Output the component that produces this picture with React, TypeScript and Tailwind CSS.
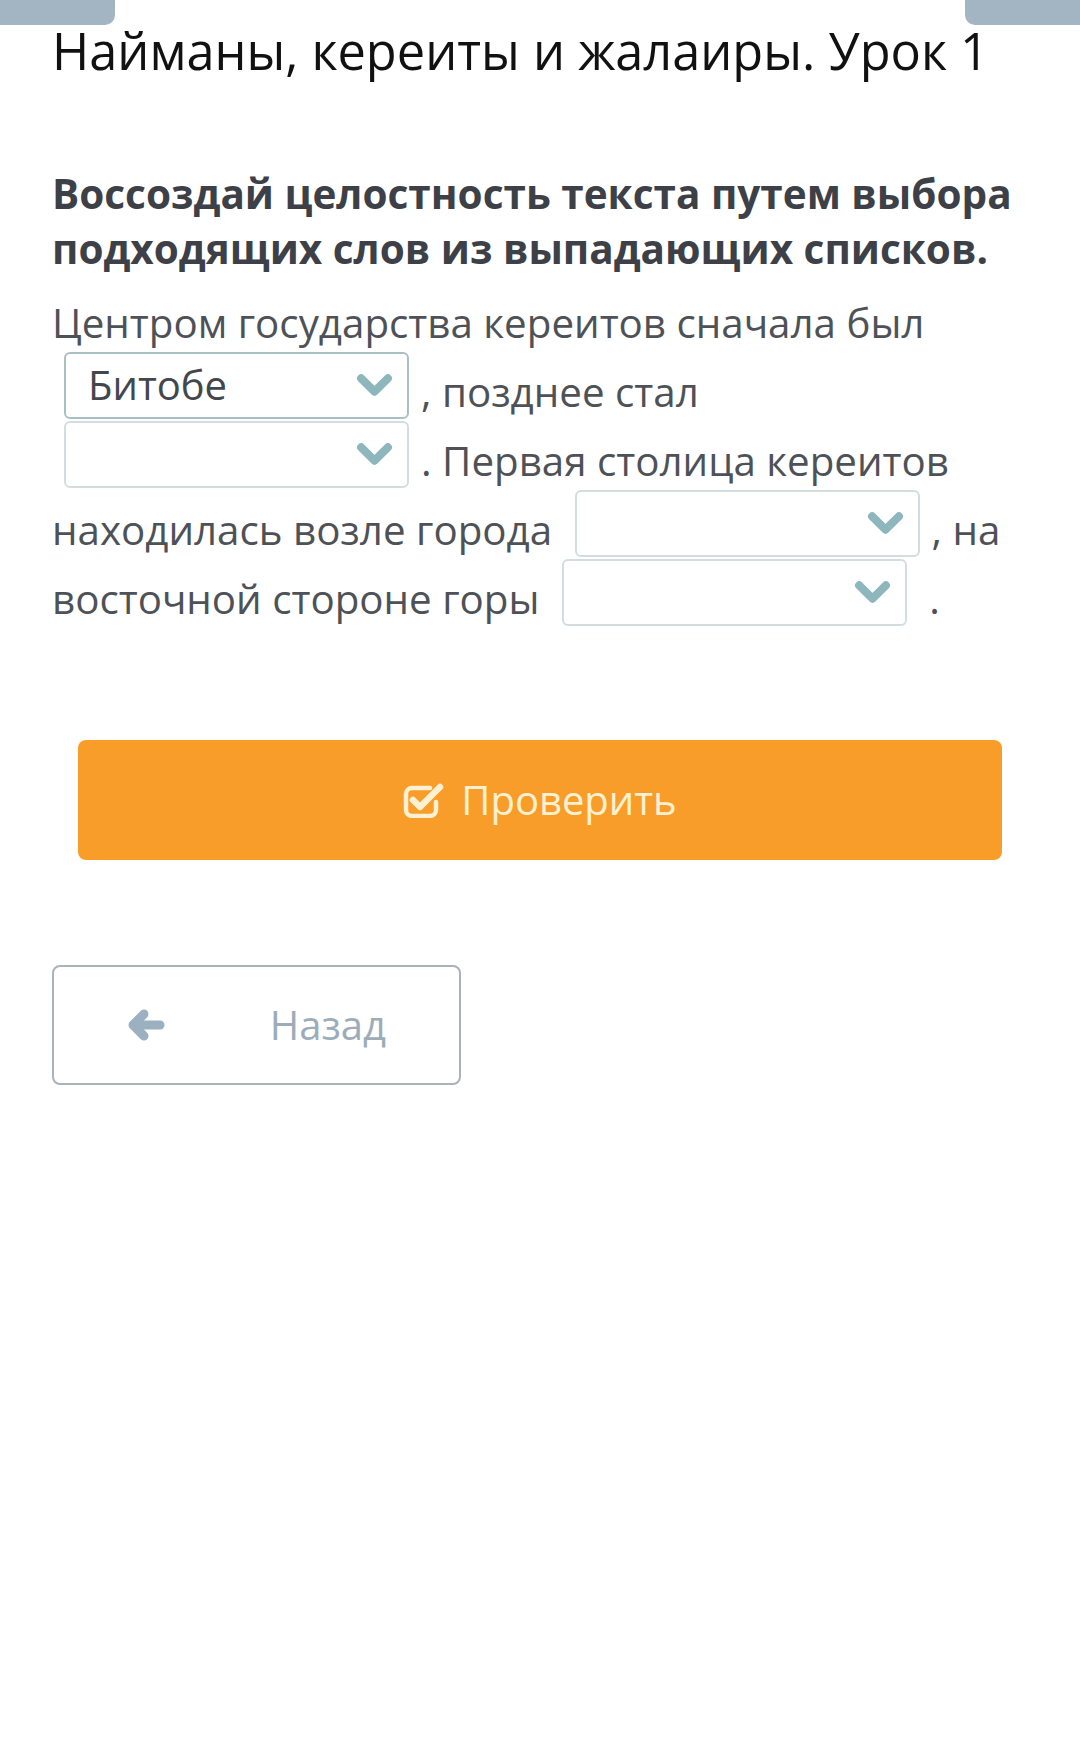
const Chevron = () => (
  <svg viewBox="0 0 36 24" className="h-[25px] w-[37px]" fill="none">
    <polyline
      points="5,5 18,18 31,5"
      stroke="#8db6bd"
      strokeWidth="8"
      strokeLinecap="round"
      strokeLinejoin="round"
    />
  </svg>
);

const CheckSquare = () => (
  <svg viewBox="0 0 42 36" className="h-[36px] w-[42px]" fill="none">
    <path
      d="M27 6 H9 a6 6 0 0 0 -6 6 v16 a6 6 0 0 0 6 6 h18 a6 6 0 0 0 6 -6 v-8"
      stroke="currentColor"
      strokeWidth="4.5"
      strokeLinecap="round"
    />
    <polyline
      points="10,18 17,25 37,5"
      stroke="currentColor"
      strokeWidth="6.5"
      strokeLinecap="round"
      strokeLinejoin="round"
    />
  </svg>
);

const ArrowLeft = () => (
  <svg viewBox="0 0 38 32" className="h-[32px] w-[38px]" fill="none">
    <polyline
      points="17,5 6,16 17,27"
      stroke="#9bb0c0"
      strokeWidth="9"
      strokeLinecap="round"
      strokeLinejoin="round"
    />
    <line
      x1="7"
      y1="16"
      x2="33"
      y2="16"
      stroke="#9bb0c0"
      strokeWidth="9"
      strokeLinecap="round"
    />
  </svg>
);

const Dropdown = ({ value, active }: { value?: string; active?: boolean }) => {
  return (
    <span
      className={`mx-3 -mt-[17px] mb-[5px] inline-flex h-[67px] w-[345px] items-center justify-between rounded-md border-2 bg-white pl-[22px] pr-[14px] align-middle ${
        active ? 'border-[#a9bfc3]' : 'border-[#d3dddf]'
      }`}
    >
      <span className="text-[40px] leading-none text-[#43474c]">{value}</span>
      <Chevron />
    </span>
  );
};

export default function App() {
  return (
    <div
      className="relative min-h-screen w-full bg-white"
      style={{ fontFamily: '"Open Sans", "Noto Sans", sans-serif' }}
    >
      {/* top tabs */}
      <div className="absolute left-0 top-0 h-[25px] w-[115px] rounded-br-[10px] bg-[#a3b5c2]" />
      <div className="absolute right-0 top-0 h-[25px] w-[115px] rounded-bl-[10px] bg-[#a3b5c2]" />

      <main className="px-[52px] pt-[18px]">
        <h1 className="text-[50.5px] leading-[66px] text-[#111]">
          Найманы, кереиты и жалаиры. Урок 1
        </h1>

        <h2 className="mt-[82px] text-[40.5px] font-bold leading-[55px] text-[#3d4147]">
          Воссоздай целостность текста путем выбора подходящих слов из выпадающих
          списков.
        </h2>

        <div className="mt-[12px] text-[40.3px] leading-[69px] text-[#4e5257]">
          Центром государства кереитов сначала был{' '}
          <Dropdown value="Битобе" active />, позднее стал{' '}
          <Dropdown />. Первая столица кереитов находилась возле города{' '}
          <Dropdown />, на восточной стороне горы <Dropdown /> .
        </div>

        <div className="mt-[107px] px-[26px]">
          <button className="flex h-[120px] w-full items-center justify-center gap-[16px] rounded-lg bg-[#f99d2a] text-[40px] text-[#fdf1d2]">
            <CheckSquare />
            <span>Проверить</span>
          </button>
        </div>

        <button className="mt-[105px] flex h-[120px] w-[409px] items-center justify-between rounded-lg border-2 border-[#aab3b7] bg-white px-[73px] text-[40px] text-[#9cadb9]">
          <ArrowLeft />
          <span>Назад</span>
        </button>
      </main>
    </div>
  );
}
